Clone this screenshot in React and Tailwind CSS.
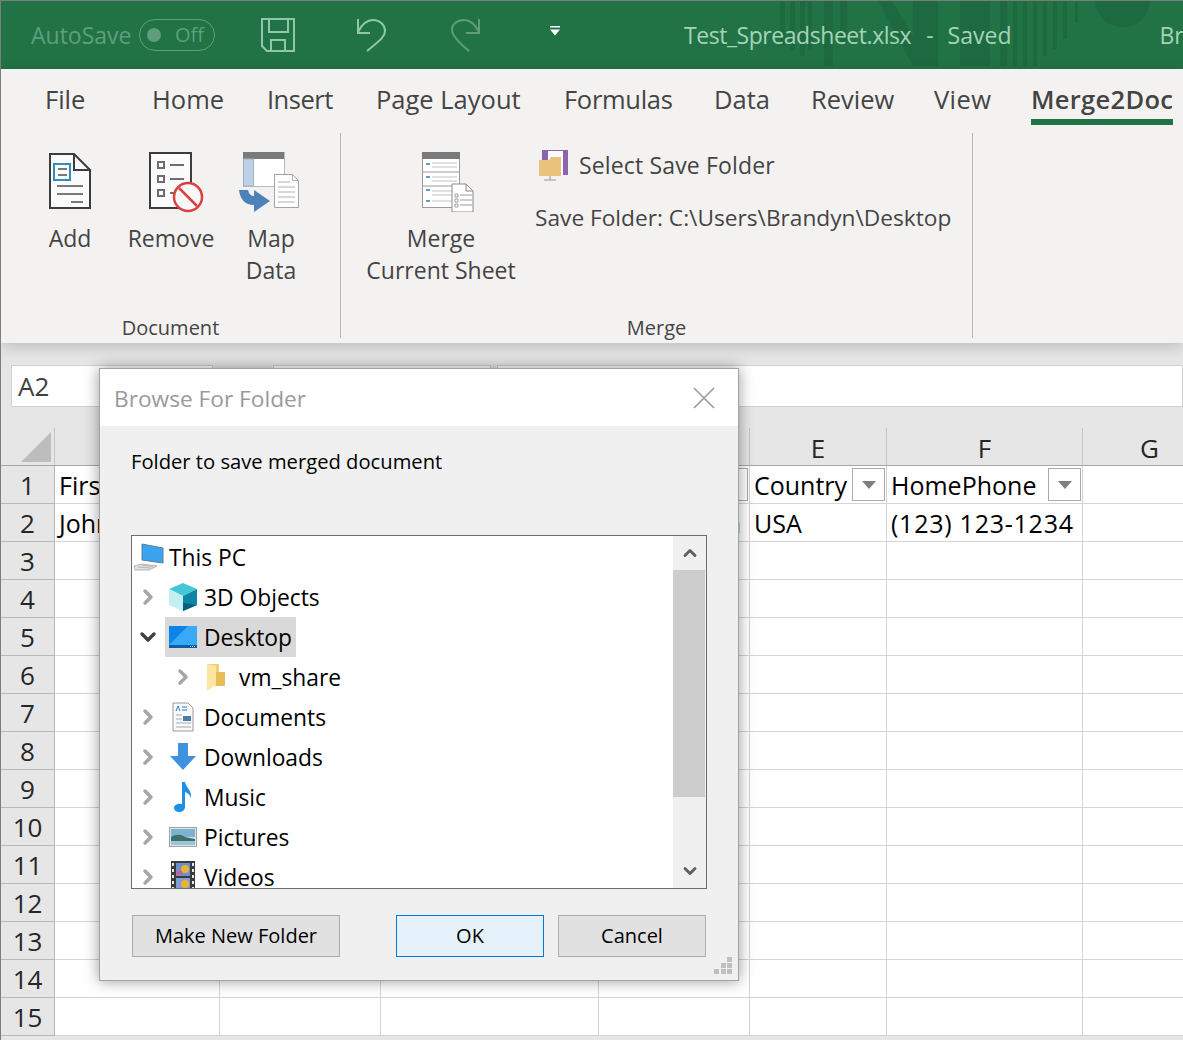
import { ChevronRight, ChevronDown, ChevronUp } from 'lucide-react'

const tabs = [
  { label: 'File', width: 'w-[107px]' },
  { label: 'Home', width: 'w-[115px]' },
  { label: 'Insert', width: 'w-[109px] tracking-[-0.5px]' },
  { label: 'Page Layout', width: 'w-[188px]' },
  { label: 'Formulas', width: 'w-[150px] tracking-[-0.3px]' },
  { label: 'Data', width: 'w-[97px]' },
  { label: 'Review', width: 'w-[123px]' },
  { label: 'View', width: 'w-[97px] tracking-[0.4px]' },
]

const columns = ['', 'A', 'B', 'C', 'D', 'E', 'F', 'G']
const rows = Array.from({ length: 15 }, (_, i) => i + 1)

function SaveIcon() {
  return (
    <svg width="34" height="34" viewBox="0 0 34 34" fill="none" stroke="#8fc7a8" strokeWidth="2">
      <path d="M1 1h32v32H6l-5-5z" />
      <path d="M8 1v13h19V1M10 33V22h14v11" />
    </svg>
  )
}

function UndoIcon() {
  return (
    <svg width="32" height="34" viewBox="0 0 32 34" fill="none" stroke="#8fc7a8" strokeWidth="2">
      <path d="M2 1v14h12" />
      <path d="M2 14C6 6 11 2 17 2c7 0 12 5 12 11 0 5-3 8-18 20" />
    </svg>
  )
}

function RedoIcon() {
  return (
    <svg width="32" height="34" viewBox="0 0 32 34" fill="none" stroke="#5f9e7c" strokeWidth="2">
      <path d="M30 1v14H17" />
      <path d="M30 14C26 6 21 2 15 2 8 2 3 6 3 12c0 5 5 11 17 21" />
    </svg>
  )
}

function TitlePattern() {
  return (
    <svg className="absolute left-[739px] top-0" width="444" height="66" viewBox="0 0 444 66" fill="#1e6a40">
      <rect x="40" y="0" width="5" height="45" />
      <rect x="50" y="0" width="5" height="50" />
      <rect x="60" y="0" width="5" height="55" />
      <rect x="68" y="0" width="4" height="50" />
      <rect x="84" y="0" width="9" height="65" />
      <rect x="100" y="0" width="7" height="42" />
      <path d="M138 0h14l21 35V0h25v65h-25z" />
      <rect x="220" y="0" width="30" height="65" />
      <rect x="260" y="0" width="7" height="65" />
      <rect x="273" y="0" width="4" height="65" />
      <rect x="283" y="0" width="4" height="65" />
      <rect x="293" y="0" width="4" height="65" />
      <rect x="303" y="0" width="4" height="55" />
      <rect x="313" y="0" width="4" height="48" />
      <rect x="323" y="0" width="4" height="38" />
      <rect x="335" y="0" width="3" height="22" />
      <path d="M355 0h55c-1 16-12 26-27 26s-27-10-28-26z" />
    </svg>
  )
}

function AddIcon() {
  return (
    <svg width="44" height="58" viewBox="0 0 44 58" fill="none">
      <path d="M2 2h24l16 16v38H2z" fill="#fbfbfb" stroke="#3d3d3d" strokeWidth="2" />
      <path d="M26 2v16h16" stroke="#3d3d3d" strokeWidth="2" />
      <rect x="6" y="12" width="16" height="16" stroke="#2f8fbf" strokeWidth="2" />
      <path d="M10 17h9M10 23h9M9 34h26M9 42h26M23 50h12" stroke="#7a7a7a" strokeWidth="2" />
    </svg>
  )
}

function RemoveIcon() {
  return (
    <svg width="56" height="64" viewBox="0 0 56 64" fill="none">
      <rect x="1" y="1" width="41" height="55" fill="#fbfbfb" stroke="#3d3d3d" strokeWidth="2" />
      <path d="M9 10h6v6H9zM9 24h6v6H9zM9 38h6v6H9z" stroke="#6e6e6e" strokeWidth="2" />
      <path d="M21 13h14M21 27h14M21 41h4" stroke="#6e6e6e" strokeWidth="2" />
      <circle cx="39" cy="45" r="14" fill="#f8f8f8" stroke="#d9403f" strokeWidth="2.500" />
      <path d="M30 36l18 18" stroke="#d9403f" strokeWidth="2.500" />
    </svg>
  )
}

function MapDataIcon() {
  return (
    <svg width="62" height="62" viewBox="0 0 62 62" fill="none">
      <rect x="4.500" y="0.500" width="41" height="34" fill="#fff" stroke="#b8b8b8" />
      <rect x="4" y="0" width="41" height="7" fill="#7a7a7a" />
      <rect x="4.500" y="7" width="10" height="27" fill="#bcd0e6" stroke="#9fb0c4" />
      <path d="M35.500 22.500h18l6 6v27h-24z" fill="#fff" stroke="#a3a3a3" />
      <path d="M53.500 22.500v6h6M39 30h12M39 35h17M39 40h17M39 45h17M39 50h17" stroke="#b0b0b0" />
      <path d="M0 38h9c1 4 3 6 6 6v-6l16 11-16 11v-7C6 53 1 47 0 38z" fill="#4a82b9" />
    </svg>
  )
}

function MergeIcon() {
  return (
    <svg width="52" height="60" viewBox="0 0 52 60" fill="none">
      <rect x="0.500" y="0.500" width="37" height="55" fill="#fff" stroke="#9a9a9a" />
      <rect x="0" y="0" width="38" height="7" fill="#7a7a7a" />
      <path d="M1 20h37M1 34h37" stroke="#9a9a9a" />
      <path d="M4 12h4M4 25h4M4 38h4M4 49h4" stroke="#2f7fa8" strokeWidth="1.500" />
      <path d="M10 11h25M10 15h25M10 25h25M10 29h25M10 39h25M10 43h25M10 49h25" stroke="#c2c2c2" />
      <path d="M30 32h14l7 7v21H30z" fill="#fff" stroke="#8a8a8a" />
      <path d="M44 32v7h7" stroke="#8a8a8a" />
      <path d="M38 43h12M38 48h12M38 53h12" stroke="#9a9a9a" />
      <path d="M33 42h3v3h-3zM33 47h3v3h-3zM33 52h3v3h-3z" stroke="#8a8a8a" strokeWidth="0.800" />
    </svg>
  )
}

function SaveFolderIcon() {
  return (
    <svg width="30" height="32" viewBox="0 0 30 32" fill="none">
      <rect x="3" y="1" width="26" height="25" fill="#8e63ad" />
      <rect x="9" y="2" width="15" height="24" fill="#fafafa" />
      <path d="M0 11h10l2-3h10v19H0z" fill="#e9c27c" />
      <path d="M11 27v4M5 31h12" stroke="#9a9a9a" />
    </svg>
  )
}

function PcIcon() {
  return (
    <svg width="32" height="28" viewBox="0 0 32 28" fill="none">
      <path d="M10 1l21 4v15L10 17z" fill="#3aa4f0" stroke="#5b7f9a" />
      <path d="M2 23l8-2 15 2-8 4H3z" fill="#e2e2e2" stroke="#b5b5b5" />
      <path d="M6 24l12 1M10 22l11 2" stroke="#b5b5b5" />
    </svg>
  )
}

function CubeIcon() {
  return (
    <svg width="28" height="28" viewBox="0 0 28 28">
      <path d="M14 0l14 6-14 7L0 6z" fill="#43c7d6" />
      <path d="M0 6l14 7v15L0 22z" fill="#c3eef2" />
      <path d="M28 6l-14 7v15l14-6z" fill="#0d86a6" />
      <path d="M14 20l14 2-14 6z" fill="#065f7d" />
    </svg>
  )
}

function DesktopIcon() {
  return (
    <svg width="28" height="22" viewBox="0 0 28 22">
      <rect width="28" height="22" fill="#0a84e6" />
      <path d="M0 19L19 0h9v19z" fill="#39a9f5" />
      <rect y="19" width="28" height="3" fill="#0a5fa8" />
      <path d="M21 20.500h6" stroke="#d8ecfb" strokeWidth="1" strokeDasharray="1 1" />
    </svg>
  )
}

function FolderIcon() {
  return (
    <svg width="18" height="27" viewBox="0 0 18 27">
      <path d="M0 0h12v22H0z" fill="#f2cf71" />
      <path d="M0 0l9 2v19l-9 6z" fill="#fbe6a2" />
      <path d="M9 8h9v14H9z" fill="#e9bd55" />
    </svg>
  )
}

function DocumentsIcon() {
  return (
    <svg width="22" height="30" viewBox="0 0 22 30" fill="none">
      <path d="M1 1h15l5 5v23H1z" fill="#fafafa" stroke="#9a9a9a" />
      <path d="M10 5h5M10 8h5" stroke="#2d7fd0" />
      <path d="M4 9l2-5 2 5" stroke="#2d7fd0" />
      <rect x="11" y="14" width="8" height="5" fill="#4d7fa6" />
      <path d="M4 13h6M4 17h6M4 21h15M4 25h15" stroke="#a8a8a8" />
    </svg>
  )
}

function DownloadsIcon() {
  return (
    <svg width="26" height="28" viewBox="0 0 26 28">
      <path d="M8 0h10v13h8L13 27 0 13h8z" fill="#3f92e0" />
    </svg>
  )
}

function MusicIcon() {
  return (
    <svg width="20" height="30" viewBox="0 0 20 30">
      <path d="M9 0h3c1 6 7 8 6 16-1-3-3-5-6-6v15c0 3-3 5-6 5s-5-2-5-4c0-3 4-5 8-4z" fill="#1e90e8" />
    </svg>
  )
}

function PicturesIcon() {
  return (
    <svg width="28" height="20" viewBox="0 0 28 20">
      <rect x="0.500" y="0.500" width="27" height="19" fill="#d7e6ee" stroke="#a2a2a2" />
      <rect x="2" y="2" width="24" height="8" fill="#7fb2d0" />
      <path d="M2 10c5-3 10-3 14 0l10 2v6H2z" fill="#3f6f6a" />
      <path d="M2 14h24v4H2z" fill="#9cc3d6" />
    </svg>
  )
}

function VideosIcon() {
  return (
    <svg width="24" height="32" viewBox="0 0 24 32">
      <rect width="24" height="32" fill="#3a3a3a" />
      <path d="M1 2h2v3H1zM1 8h2v3H1zM1 14h2v3H1zM1 20h2v3H1zM1 26h2v3H1zM21 2h2v3h-2zM21 8h2v3h-2zM21 14h2v3h-2zM21 20h2v3h-2zM21 26h2v3h-2z" fill="#e8e8e8" />
      <rect x="5" y="2" width="14" height="13" fill="#6f8fd0" />
      <rect x="5" y="17" width="14" height="13" fill="#7f9fd8" />
      <circle cx="14" cy="8" r="4" fill="#e8b531" />
      <circle cx="14" cy="23" r="4" fill="#e8b531" />
      <path d="M6 10h5v4H6z" fill="#d45a8c" />
    </svg>
  )
}

const treeItems = [
  { label: 'This PC', icon: PcIcon, pad: 'pl-0', iconBox: 'w-[37px] justify-start', chevron: 'none' },
  { label: '3D Objects', icon: CubeIcon, pad: 'pl-0', iconBox: 'w-[39px] justify-center pr-[3px]', chevron: 'right' },
  { label: 'Desktop', icon: DesktopIcon, pad: 'pl-0', iconBox: 'w-[39px] justify-center pr-[3px]', chevron: 'down', selected: true },
  { label: 'vm_share', icon: FolderIcon, pad: 'pl-[35px]', iconBox: 'w-[39px] justify-center pr-[7px]', chevron: 'right' },
  { label: 'Documents', icon: DocumentsIcon, pad: 'pl-0', iconBox: 'w-[39px] justify-center pr-[3px]', chevron: 'right' },
  { label: 'Downloads', icon: DownloadsIcon, pad: 'pl-0', iconBox: 'w-[39px] justify-center pr-[3px]', chevron: 'right' },
  { label: 'Music', icon: MusicIcon, pad: 'pl-0', iconBox: 'w-[39px] justify-center pr-[3px]', chevron: 'right' },
  { label: 'Pictures', icon: PicturesIcon, pad: 'pl-0', iconBox: 'w-[39px] justify-center pr-[3px]', chevron: 'right' },
  { label: 'Videos', icon: VideosIcon, pad: 'pl-0', iconBox: 'w-[39px] justify-center pr-[3px]', chevron: 'right' },
]

function TreeRow({ item }) {
  const Icon = item.icon
  return (
    <div className={`flex h-10 shrink-0 items-center ${item.pad}`}>
      {item.chevron === 'right' && (
        <div className="flex w-[33px] justify-center pr-[1px]">
          <ChevronRight size={24} strokeWidth={3.5} className="text-[#a6a6a6]" />
        </div>
      )}
      {item.chevron === 'down' && (
        <div className="flex w-[33px] justify-center pr-[1px]">
          <ChevronDown size={24} strokeWidth={3.5} className="text-[#404040]" />
        </div>
      )}
      <div className={`flex h-10 items-center pr-1 ${item.selected ? 'bg-[#d9d9d9]' : ''}`}>
        <div className={`flex ${item.iconBox}`}>
          <Icon />
        </div>
        <span className="pt-[2px] text-[22.800px] text-black">{item.label}</span>
      </div>
    </div>
  )
}

function FilterButton() {
  return (
    <div className="mr-[1px] flex h-[33px] w-[33px] shrink-0 items-center justify-center border border-[#ababab] bg-white">
      <svg width="16" height="8" viewBox="0 0 16 8">
        <path d="M1 0h14L8 8z" fill="#7f7f7f" />
      </svg>
    </div>
  )
}

function Cell({ row, col }) {
  const base = 'flex items-center overflow-hidden whitespace-nowrap border-b border-r border-[#d4d4d4] bg-white text-[25px] leading-none text-black'
  let content = null
  if (row === 1 && col === 'A') content = <span className="pl-1 pt-[2px]">FirstName</span>
  if (row === 2 && col === 'A') content = <span className="pl-1 pt-[2px]">John</span>
  if (row === 1 && col === 'D') return <div className={`${base} justify-end`}><FilterButton /></div>
  if (row === 2 && col === 'D') return <div className={`${base} justify-end pr-2`}><span className="pt-[2px]">Brandyn</span></div>
  if (row === 1 && col === 'E') return <div className={`${base} justify-between`}><span className="pl-1 pt-[2px]">Country</span><FilterButton /></div>
  if (row === 2 && col === 'E') content = <span className="pl-1 pt-[2px]">USA</span>
  if (row === 1 && col === 'F') return <div className={`${base} justify-between`}><span className="pl-1 pt-[2px]">HomePhone</span><FilterButton /></div>
  if (row === 2 && col === 'F') content = <span className="pl-1 pt-[2px] tracking-[0.75px]">(123) 123-1234</span>
  return <div className={base}>{content}</div>
}

function Sheet() {
  return (
    <div className="grid grid-cols-[54px_165px_161px_218px_151px_137px_196px_134px] grid-rows-[59px] auto-rows-[38px]">
      {columns.map((col, i) => (
        <div key={col || 'corner'} className="flex items-end border-b border-[#a6a6a6] bg-[#e6e6e6]">
          {i === 0 ? (
            <div className="flex h-[37px] w-full items-end justify-end border-r border-[#c6c6c6] pb-[3px] pr-[3px]">
              <svg width="30" height="30" viewBox="0 0 30 30">
                <path d="M30 0v30H0z" fill="#bdbdbd" />
              </svg>
            </div>
          ) : (
            <div className="flex h-[37px] w-full items-center justify-center border-r border-[#c6c6c6] pt-[3px] text-[26px] text-[#262626]">
              {col}
            </div>
          )}
        </div>
      ))}
      {rows.map((row) => [
        <div key={`h${row}`} className="flex items-center justify-center border-b border-r border-[#b8b8b8] bg-[#e6e6e6] pt-[2px] text-[26px] text-[#262626]">
          {row}
        </div>,
        ...columns.slice(1).map((col) => <Cell key={`${col}${row}`} row={row} col={col} />),
      ])}
    </div>
  )
}

function BrowseDialog() {
  return (
    <div className="absolute left-[98px] top-[367px] flex h-[613px] w-[640px] flex-col border border-[#a3a3a3] bg-[#f0f0f0] shadow-[0_0_14px_rgba(0,0,0,0.4)]">
      <div className="flex h-[57px] shrink-0 items-center justify-between bg-white pl-[14px] pr-[23px]">
        <span className="pt-[3px] text-[22.700px] text-[#9a9a9a]">Browse For Folder</span>
        <svg width="22" height="22" viewBox="0 0 22 22" stroke="#9a9a9a" strokeWidth="1.600">
          <path d="M1 1l20 20M21 1L1 21" />
        </svg>
      </div>
      <div className="flex flex-1 flex-col px-[31px] pt-[21px]">
        <p className="h-[88px] text-[20.200px] leading-[28px] text-black">Folder to save merged document</p>
        <div className="flex h-[354px] w-[576px] border border-[#6e6e6e] bg-white">
          <div className="flex flex-1 flex-col overflow-hidden pt-[1px]">
            {treeItems.map((item) => <TreeRow key={item.label} item={item} />)}
          </div>
          <div className="flex w-[33px] flex-col bg-[#f0f0f0]">
            <div className="flex h-[34px] items-center justify-center">
              <ChevronUp size={20} strokeWidth={3.5} className="text-[#606060]" />
            </div>
            <div className="h-[227px] w-[32px] bg-[#cdcdcd]" />
            <div className="flex-1" />
            <div className="flex h-[34px] items-center justify-center">
              <ChevronDown size={20} strokeWidth={3.5} className="text-[#606060]" />
            </div>
          </div>
        </div>
        <div className="mt-[26px] flex items-center pl-[1px]">
          <button className="h-[42px] w-[208px] border border-[#adadad] bg-[#e1e1e1] text-[20px] text-black">Make New Folder</button>
          <button className="ml-[56px] h-[42px] w-[148px] border border-[#0078d7] bg-[#e5f1fb] text-[20px] text-black">OK</button>
          <button className="ml-[14px] h-[42px] w-[148px] border border-[#adadad] bg-[#e1e1e1] text-[20px] text-black">Cancel</button>
        </div>
      </div>
      <svg className="absolute bottom-[5px] right-[6px]" width="18" height="18" viewBox="0 0 18 18" fill="#bfbfbf">
        <path d="M13 0h5v5h-5zM7 6h5v5H7zM13 6h5v5h-5zM0 12h5v5H0zM7 12h5v5H7zM13 12h5v5h-5z" />
      </svg>
    </div>
  )
}

export default function App() {
  return (
    <div className="relative h-[1040px] w-[1183px] overflow-hidden border-l border-t border-[#7d7d7d] bg-[#e6e6e6] font-['Open_Sans',sans-serif]">
      <header className="relative flex h-[68px] items-center overflow-hidden whitespace-pre bg-[#217346] pl-[30px] text-[23px]">
        <TitlePattern />
        <span className="relative w-[108px] shrink-0 text-[#5f9e7c]">AutoSave</span>
        <div className="relative flex h-8 w-[76px] shrink-0 items-center justify-between rounded-full border border-[#5f9e7c] pl-[7px] pr-[10px]">
          <span className="h-[14px] w-[14px] rounded-full bg-[#5f9e7c]" />
          <span className="text-[20px] text-[#5f9e7c]">Off</span>
        </div>
        <div className="relative ml-[46px] shrink-0"><SaveIcon /></div>
        <div className="relative ml-[61px] shrink-0"><UndoIcon /></div>
        <div className="relative ml-[61px] shrink-0"><RedoIcon /></div>
        <svg className="relative ml-[68px] -mt-[8px] shrink-0" width="12" height="10" viewBox="0 0 12 10" fill="#fff">
          <path d="M1 0h10v1.500H1zM1 3.500h10L6 9.500z" />
        </svg>
        <span className="relative ml-[123px] shrink-0 tracking-[-0.45px] text-[#a5d3b8]">Test_Spreadsheet.xlsx</span>
        <span className="relative ml-[15px] shrink-0 text-[#a5d3b8]">-</span>
        <span className="relative ml-[14px] shrink-0 text-[#a5d3b8]">Saved</span>
        <span className="relative ml-[148px] shrink-0 text-[#a5d3b8]">Br</span>
      </header>

      <div className="relative z-10 h-[274px] bg-[#f3f2f1] shadow-[0_4px_14px_rgba(0,0,0,0.18)]">
        <nav className="flex h-[64px] items-start whitespace-nowrap pl-[44px] pt-[12px] text-[25.500px] leading-[37px] text-[#444444]">
          {tabs.map((tab) => (
            <span key={tab.label} className={tab.width}>{tab.label}</span>
          ))}
          <span className="border-b-[6px] border-[#217346] pb-[1px] font-semibold tracking-[0.3px]">Merge2Doc</span>
        </nav>
        <div className="flex h-[205px] text-[23px] leading-[32px] text-[#444444]">
          <section className="flex w-[340px] flex-col justify-between border-r border-[#b5b5b5] pt-[18px]">
            <div className="flex pl-[19px]">
              <div className="flex w-[100px] flex-col items-center">
                <div className="h-[71px] pt-[1px]"><AddIcon /></div>
                <span>Add</span>
              </div>
              <div className="flex w-[102px] flex-col items-center">
                <div className="h-[71px] pl-[12px] pt-[1px]"><RemoveIcon /></div>
                <span>Remove</span>
              </div>
              <div className="flex w-[98px] flex-col items-center text-center">
                <div className="h-[71px] pr-[2px] pt-[1px]"><MapDataIcon /></div>
                <span>Map<br />Data</span>
              </div>
            </div>
            <div className="text-center text-[20px] leading-[20px]">Document</div>
          </section>
          <section className="flex w-[632px] flex-col justify-between border-r border-[#b5b5b5] pt-[18px]">
            <div className="flex pl-[6px]">
              <div className="flex w-[188px] flex-col items-center text-center">
                <div className="h-[71px] pl-[14px] pt-[1px]"><MergeIcon /></div>
                <span>Merge<br />Current Sheet</span>
              </div>
              <div className="-mt-[3px] flex flex-col gap-[20px] whitespace-nowrap text-[22.700px]">
                <div className="flex items-center">
                  <div className="ml-[4px] w-[40px]"><SaveFolderIcon /></div>
                  <span className="pt-[1px] text-[23px] tracking-[0.15px]">Select Save Folder</span>
                </div>
                <span className="pt-[1px]">Save Folder: C:\Users\Brandyn\Desktop</span>
              </div>
            </div>
            <div className="text-center text-[20px] leading-[20px]">Merge</div>
          </section>
        </div>
      </div>

      <div className="flex h-[64px] items-end bg-[#e6e6e6] pl-[10px] text-[26px] text-[#404040]">
        <div className="flex h-[42px] w-[202px] items-center border border-[#d0d0d0] bg-white pl-[6px]">A2</div>
        <div className="ml-[60px] h-[42px] w-[218px] border border-[#d0d0d0] bg-white" />
        <div className="ml-[6px] h-[42px] flex-1 border border-[#d0d0d0] bg-white" />
      </div>

      <Sheet />
      <BrowseDialog />
    </div>
  )
}
